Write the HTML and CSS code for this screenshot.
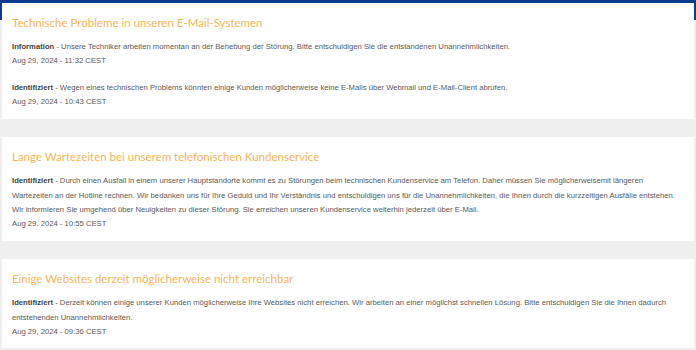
FILE: index.html
```html
<!DOCTYPE html>
<html lang="de">
<head>
<meta charset="utf-8">
<link rel="stylesheet" href="styles.css">
</head>
<body>
<div class="page">
  <section class="card">
    <h2 class="title">Technische Probleme in unseren E-Mail-Systemen</h2>
    <div class="update">
      <p class="text"><strong>Information</strong> - Unsere Techniker arbeiten momentan an der Behebung der Störung. Bitte entschuldigen Sie die entstandenen Unannehmlichkeiten.</p>
      <p class="date">Aug 29, 2024 - 11:32 CEST</p>
    </div>
    <div class="update">
      <p class="text"><strong>Identifiziert</strong> - Wegen eines technischen Problems könnten einige Kunden möglicherweise keine E-Mails über Webmail und E-Mail-Client abrufen.</p>
      <p class="date">Aug 29, 2024 - 10:43 CEST</p>
    </div>
  </section>
  <section class="card">
    <h2 class="title">Lange Wartezeiten bei unserem telefonischen Kundenservice</h2>
    <div class="update">
      <p class="text"><strong>Identifiziert</strong> - Durch einen Ausfall in einem unserer Hauptstandorte kommt es zu Störungen beim technischen Kundenservice am Telefon. Daher müssen Sie möglicherweisemit längeren Wartezeiten an der Hotline rechnen. Wir bedanken uns für Ihre Geduld und Ihr Verständnis und entschuldigen uns für die Unannehmlichkeiten, die Ihnen durch die kurzzeitigen Ausfälle entstehen. Wir informieren Sie umgehend über Neuigkeiten zu dieser Störung. Sie erreichen unseren Kundenservice weiterhin jederzeit über E-Mail.</p>
      <p class="date">Aug 29, 2024 - 10:55 CEST</p>
    </div>
  </section>
  <section class="card">
    <h2 class="title">Einige Websites derzeit möglicherweise nicht erreichbar</h2>
    <div class="update">
      <p class="text"><strong>Identifiziert</strong> - Derzeit können einige unserer Kunden möglicherweise Ihre Websites nicht erreichen. Wir arbeiten an einer möglichst schnellen Lösung. Bitte entschuldigen Sie die Ihnen dadurch entstehenden Unannehmlichkeiten.</p>
      <p class="date">Aug 29, 2024 - 09:36 CEST</p>
    </div>
  </section>
</div>
</body>
</html>
```

FILE: styles.css
```css
html, body {
  margin: 0;
  padding: 0;
}
body {
  background: #efefef;
  font-family: "Liberation Sans", Arial, sans-serif;
}
.page {
  padding: 3px 2px 0;
  background: linear-gradient(#0b3c8d 0, #0b3c8d 20px, #efefef 20px);
  display: flex;
  flex-direction: column;
  gap: 18.5px;
}
.card {
  background: #fff;
  padding: 10px 10px 9px;
}
.title {
  margin: 0 0 7px;
  font-family: Lato, "Open Sans", sans-serif;
  font-weight: 400;
  font-size: 11.5px;
  line-height: 20px;
  color: #f7b55a;
}
.update + .update {
  margin-top: 12px;
}
.text,
.date {
  margin: 0;
  font-size: 7.7px;
  line-height: 14.4px;
  color: #5a5a5a;
}
.text strong {
  color: #444;
}
```
